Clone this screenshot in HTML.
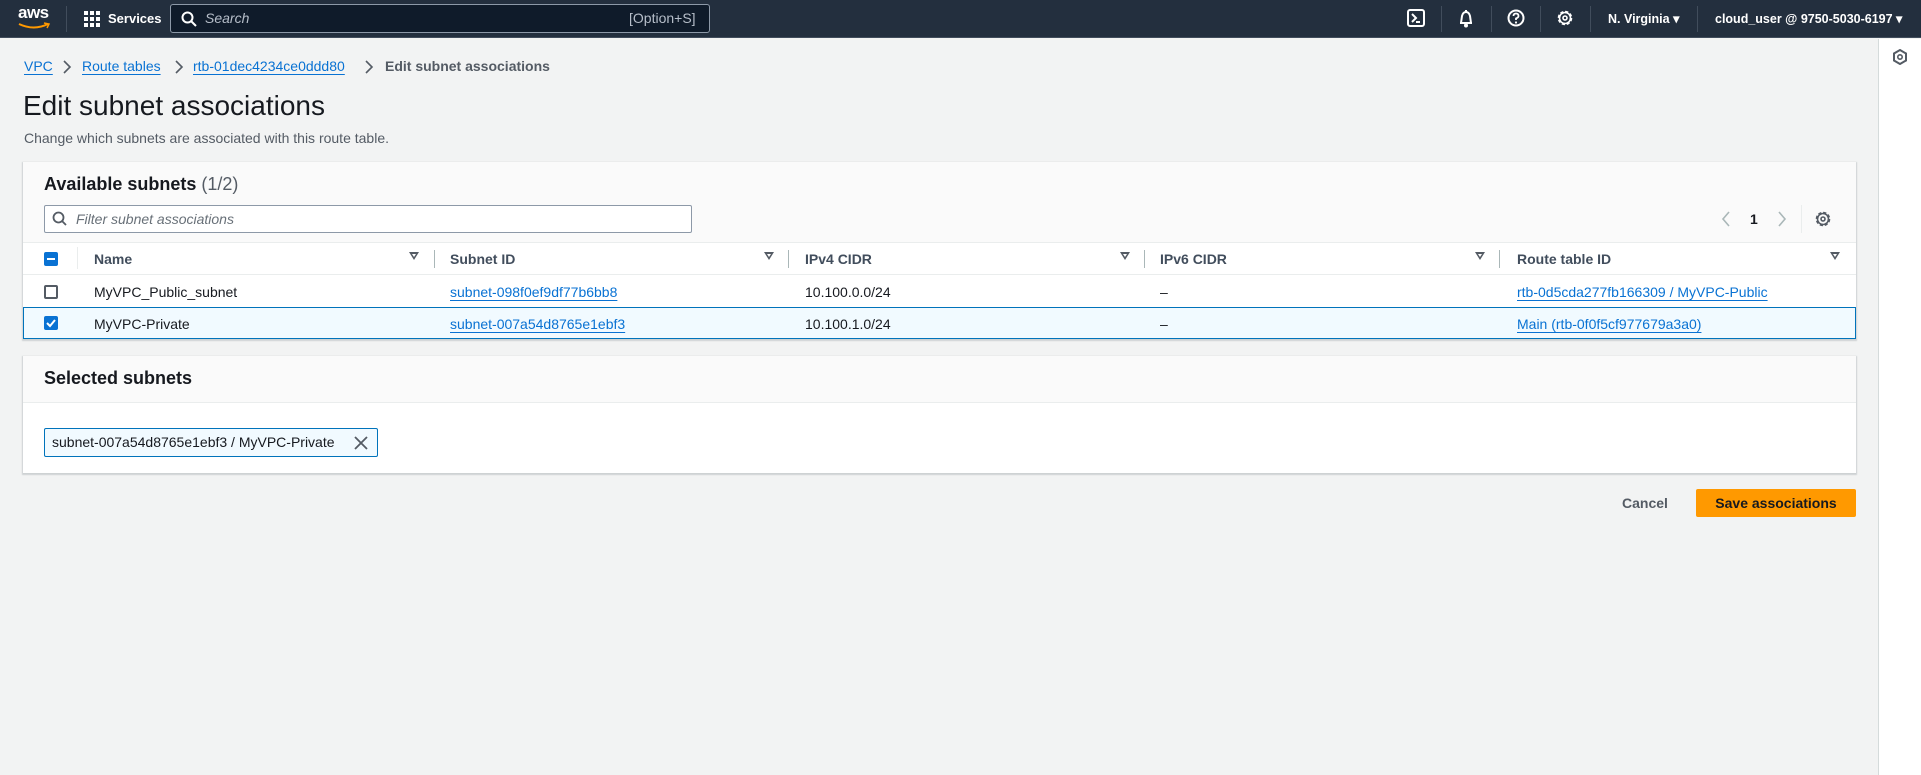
<!DOCTYPE html>
<html><head><meta charset="utf-8"><style>
*{box-sizing:border-box;margin:0;padding:0}
body{width:1921px;height:775px;background:#f2f3f3;font-family:"Liberation Sans",sans-serif;color:#16191f;position:relative;overflow:hidden;font-size:14px}
.a{position:absolute;white-space:nowrap}
.nav{position:absolute;left:0;top:0;width:1921px;height:38px;background:#232f3e;border-bottom:1px solid #414d5c}
.w{color:#fff}
.sep{position:absolute;top:6px;width:1px;height:26px;background:#414d5c}
a,.lk{color:#0972d3;text-decoration:underline;text-underline-offset:3px}
.panel{position:absolute;left:23px;width:1833px;background:#fff;box-shadow:0 1px 1px 1px rgba(0,28,36,.15)}
.th{font-weight:bold;color:#414d5c}
.cs{position:absolute;top:250px;width:1px;height:18px;background:#aab7b8}
.fa{position:absolute;top:252px;width:0;height:0;border-left:5px solid transparent;border-right:5px solid transparent;border-top:8px solid #545b64}
.fa:after{content:"";position:absolute;left:-2px;top:-6px;border-left:2px solid transparent;border-right:2px solid transparent;border-top:3px solid #fff}
.cb{position:absolute;left:44px;width:14px;height:14px;border:2px solid #545b64;border-radius:2px;background:#fff}
.cbk{border:none;background:#0972d3}
</style></head><body>
<div class="nav">
 <div class="a w" style="left:18px;top:3px;font-size:17px;font-weight:bold;letter-spacing:-0.5px">aws</div>
 <svg class="a" style="left:18px;top:22px" width="34" height="8"><path d="M1 2 Q16 9 30 2" stroke="#ff9900" stroke-width="2" fill="none"/><path d="M26 1 L31 2 L29 6" stroke="#ff9900" stroke-width="1.5" fill="none"/></svg>
 <div class="sep" style="left:66px"></div>
 <svg class="a" style="left:84px;top:11px" width="16" height="16" fill="#fff"><rect x="0" y="0" width="4" height="4"/><rect x="6" y="0" width="4" height="4"/><rect x="12" y="0" width="4" height="4"/><rect x="0" y="6" width="4" height="4"/><rect x="6" y="6" width="4" height="4"/><rect x="12" y="6" width="4" height="4"/><rect x="0" y="12" width="4" height="4"/><rect x="6" y="12" width="4" height="4"/><rect x="12" y="12" width="4" height="4"/></svg>
 <div class="a w" style="left:108px;top:11px;font-size:13px;font-weight:bold">Services</div>
 <div class="a" style="left:170px;top:4px;width:540px;height:29px;background:#0f1b2a;border:1px solid #8d99a8;border-radius:3px"></div>
 <svg class="a" style="left:181px;top:11px" width="16" height="16"><circle cx="6.5" cy="6.5" r="5" stroke="#fff" stroke-width="2" fill="none"/><path d="M10 10 L15 15" stroke="#fff" stroke-width="2"/></svg>
 <div class="a" style="left:205px;top:10px;color:#b6bec9;font-style:italic;font-size:14px">Search</div>
 <div class="a" style="left:629px;top:10px;color:#b6bec9;font-size:14px">[Option+S]</div>
 <svg class="a" style="left:1407px;top:9px" width="18" height="18"><rect x="1" y="1" width="16" height="16" rx="2" stroke="#fff" stroke-width="2" fill="none"/><path d="M5 5 L9 9 L5 13" stroke="#fff" stroke-width="2" fill="none"/><path d="M9 13 H13" stroke="#fff" stroke-width="2"/></svg>
 <div class="sep" style="left:1441px"></div>
 <svg class="a" style="left:1457px;top:9px" width="18" height="19"><path d="M9 1 L9 3 M3 14 L15 14 M4 14 L5 7 Q6 3 9 3 Q12 3 13 7 L14 14 Z" stroke="#fff" stroke-width="2" fill="none" stroke-linejoin="round"/><circle cx="9" cy="16.5" r="2" fill="#fff"/></svg>
 <div class="sep" style="left:1491px"></div>
 <svg class="a" style="left:1507px;top:9px" width="18" height="18"><circle cx="9" cy="9" r="7.5" stroke="#fff" stroke-width="2" fill="none"/><path d="M6.5 7 Q6.5 4.5 9 4.5 Q11.5 4.5 11.5 7 Q11.5 8.5 9 9.5 L9 11" stroke="#fff" stroke-width="1.8" fill="none"/><circle cx="9" cy="13.5" r="1.1" fill="#fff"/></svg>
 <div class="sep" style="left:1540px"></div>
 <svg class="a" style="left:1556px;top:9px" width="18" height="18"><circle cx="9" cy="9" r="6" stroke="#fff" stroke-width="2.6" fill="none" stroke-dasharray="3 1.7"/><circle cx="9" cy="9" r="5.5" stroke="#fff" stroke-width="1.5" fill="none"/><circle cx="9" cy="9" r="2" stroke="#fff" stroke-width="1.6" fill="none"/></svg>
 <div class="sep" style="left:1590px"></div>
 <div class="a w" style="left:1608px;top:11px;font-size:12.5px;font-weight:bold">N. Virginia ▾</div>
 <div class="sep" style="left:1697px"></div>
 <div class="a w" style="left:1715px;top:11px;font-size:12.5px;font-weight:bold">cloud_user @ 9750-5030-6197 ▾</div>
</div>
<div class="a" style="left:1878px;top:39px;width:43px;height:736px;background:#fff;border-left:1px solid #d5dbdb"></div>
<svg class="a" style="left:1893px;top:49px" width="14" height="16"><path d="M7 1 L13 4.5 L13 11.5 L7 15 L1 11.5 L1 4.5 Z" stroke="#545b64" stroke-width="2" fill="none"/><circle cx="7" cy="8" r="2.2" stroke="#545b64" stroke-width="1.6" fill="none"/></svg>

<div class="a" style="left:24px;top:58px;font-size:14px"><a>VPC</a></div>
<svg class="a" style="left:62px;top:59px" width="10" height="16"><path d="M2 2 L8 8 L2 14" stroke="#545b64" stroke-width="1.6" fill="none"/></svg>
<div class="a" style="left:82px;top:58px;font-size:14px"><a>Route tables</a></div>
<svg class="a" style="left:174px;top:59px" width="10" height="16"><path d="M2 2 L8 8 L2 14" stroke="#545b64" stroke-width="1.6" fill="none"/></svg>
<div class="a" style="left:193px;top:58px;font-size:14px"><a>rtb-01dec4234ce0ddd80</a></div>
<svg class="a" style="left:364px;top:59px" width="10" height="16"><path d="M2 2 L8 8 L2 14" stroke="#545b64" stroke-width="1.6" fill="none"/></svg>
<div class="a" style="left:385px;top:58px;font-size:14px;font-weight:bold;color:#545b64">Edit subnet associations</div>
<div class="a" style="left:23px;top:90px;font-size:28px">Edit subnet associations</div>
<div class="a" style="left:24px;top:130px;font-size:14px;color:#545b64">Change which subnets are associated with this route table.</div>

<div class="panel" style="top:162px;height:177px">
 <div style="height:81px;background:#fafafa;border-bottom:1px solid #eaeded"></div>
</div>
<div class="a" style="left:44px;top:174px;font-size:18px;font-weight:bold">Available subnets <span style="font-weight:normal;color:#545b64">(1/2)</span></div>
<div class="a" style="left:44px;top:205px;width:648px;height:28px;border:1px solid #8d99a8;border-radius:2px;background:#fff"></div>
<svg class="a" style="left:52px;top:211px" width="16" height="16"><circle cx="6.5" cy="6.5" r="5" stroke="#545b64" stroke-width="1.8" fill="none"/><path d="M10 10 L14 14" stroke="#545b64" stroke-width="1.8"/></svg>
<div class="a" style="left:76px;top:211px;font-style:italic;color:#687078;font-size:14px">Filter subnet associations</div>
<svg class="a" style="left:1721px;top:210px" width="10" height="18"><path d="M8 2 L2 9 L8 16" stroke="#aab7b8" stroke-width="1.6" fill="none"/></svg>
<div class="a" style="left:1750px;top:211px;font-weight:bold;font-size:14px">1</div>
<svg class="a" style="left:1777px;top:210px" width="10" height="18"><path d="M2 2 L8 9 L2 16" stroke="#aab7b8" stroke-width="1.6" fill="none"/></svg>
<div class="a" style="left:1801px;top:205px;width:1px;height:28px;background:#eaeded"></div>
<svg class="a" style="left:1814px;top:210px" width="18" height="18"><circle cx="9" cy="9" r="6" stroke="#545b64" stroke-width="2.6" fill="none" stroke-dasharray="3 1.7"/><circle cx="9" cy="9" r="5.5" stroke="#545b64" stroke-width="1.5" fill="none"/><circle cx="9" cy="9" r="2" stroke="#545b64" stroke-width="1.6" fill="none"/></svg>

<div class="a" style="left:23px;top:274px;width:1833px;height:1px;background:#eaeded"></div>
<div class="a" style="left:23px;top:307px;width:1833px;height:32px;background:#f1faff;border:1px solid #0073bb"></div>
<div class="cb cbk" style="top:252px"><div style="position:absolute;left:3px;top:6px;width:8px;height:2px;background:#fff"></div></div>
<div class="a" style="left:77px;top:247px;width:1px;height:22px;background:#eaeded"></div>
<div class="a th" style="left:94px;top:251px">Name</div>
<div class="fa" style="left:409px"></div><div class="cs" style="left:434px"></div>
<div class="a th" style="left:450px;top:251px">Subnet ID</div>
<div class="fa" style="left:764px"></div><div class="cs" style="left:788px"></div>
<div class="a th" style="left:805px;top:251px">IPv4 CIDR</div>
<div class="fa" style="left:1120px"></div><div class="cs" style="left:1144px"></div>
<div class="a th" style="left:1160px;top:251px">IPv6 CIDR</div>
<div class="fa" style="left:1475px"></div><div class="cs" style="left:1499px"></div>
<div class="a th" style="left:1517px;top:251px">Route table ID</div>
<div class="fa" style="left:1830px"></div>

<div class="cb" style="top:285px"></div>
<div class="a" style="left:94px;top:284px">MyVPC_Public_subnet</div>
<div class="a" style="left:450px;top:284px"><a>subnet-098f0ef9df77b6bb8</a></div>
<div class="a" style="left:805px;top:284px">10.100.0.0/24</div>
<div class="a" style="left:1160px;top:284px">–</div>
<div class="a" style="left:1517px;top:284px"><a>rtb-0d5cda277fb166309 / MyVPC-Public</a></div>

<div class="cb cbk" style="top:316px"><svg width="14" height="14" style="position:absolute"><path d="M3 7 L6 10 L11 4" stroke="#fff" stroke-width="2" fill="none"/></svg></div>
<div class="a" style="left:94px;top:316px">MyVPC-Private</div>
<div class="a" style="left:450px;top:316px"><a>subnet-007a54d8765e1ebf3</a></div>
<div class="a" style="left:805px;top:316px">10.100.1.0/24</div>
<div class="a" style="left:1160px;top:316px">–</div>
<div class="a" style="left:1517px;top:316px"><a>Main (rtb-0f0f5cf977679a3a0)</a></div>

<div class="panel" style="top:356px;height:117px">
 <div style="height:47px;background:#fafafa;border-bottom:1px solid #eaeded"></div>
</div>
<div class="a" style="left:44px;top:368px;font-size:18px;font-weight:bold">Selected subnets</div>
<div class="a" style="left:44px;top:428px;width:334px;height:29px;background:#f1faff;border:1px solid #0073bb;border-radius:2px"></div>
<div class="a" style="left:52px;top:434px;font-size:14px">subnet-007a54d8765e1ebf3 / MyVPC-Private</div>
<svg class="a" style="left:354px;top:436px" width="14" height="14"><path d="M1 1 L13 13 M13 1 L1 13" stroke="#545b64" stroke-width="1.8"/></svg>

<div class="a" style="left:1622px;top:495px;font-weight:bold;color:#545b64">Cancel</div>
<div class="a" style="left:1696px;top:489px;width:160px;height:28px;background:#ff9900;border-radius:2px;text-align:center;line-height:28px;font-weight:bold;font-size:14px">Save associations</div>
</body></html>
